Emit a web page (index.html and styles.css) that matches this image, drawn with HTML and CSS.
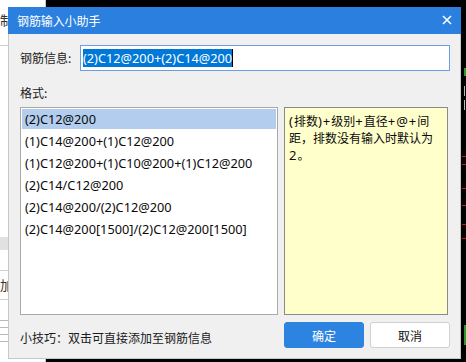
FILE: index.html
```html
<!DOCTYPE html>
<html lang="zh-CN">
<head>
<meta charset="utf-8">
<title>钢筋输入小助手</title>
<link rel="stylesheet" href="styles.css">
</head>
<body>
<div class="desktop">
  <div class="app-left">
    <div class="app-row app-row-top"><span class="app-char">制</span></div>
    <div class="app-band"></div>
    <div class="app-row app-row-mid"><span class="app-char">加</span></div>
    <div class="app-lines">
      <div class="app-line"></div>
      <div class="app-line"></div>
      <div class="app-line"></div>
      <div class="app-line"></div>
    </div>
  </div>
  <div class="cad">
    <div class="cad-mark cad-green c1"></div>
    <div class="cad-mark cad-white c2"></div>
    <div class="cad-mark cad-white c3"></div>
    <div class="cad-mark cad-red c4"></div>
    <div class="cad-mark cad-red c5"></div>
    <div class="cad-mark cad-red c6"></div>
    <div class="cad-mark cad-red c7"></div>
    <div class="cad-mark cad-red c8"></div>
    <div class="cad-mark cad-red c9"></div>
    <div class="cad-mark cad-green c10"></div>
  </div>

  <div class="dialog">
    <div class="titlebar">
      <span class="title">钢筋输入小助手</span>
      <svg class="close" width="10" height="10" viewBox="0 0 10 10"><path d="M1 1L9 9M9 1L1 9" stroke="#fff" stroke-width="1.6" fill="none"/></svg>
    </div>
    <div class="dialog-body">
      <div class="field-row">
        <span class="label">钢筋信息:</span>
        <div class="input"><span class="sel">(2)C12@200+(2)C14@200</span></div>
      </div>
      <div class="label format-label">格式:</div>
      <div class="panels">
        <div class="list">
          <div class="item selected">(2)C12@200</div>
          <div class="item">(1)C14@200+(1)C12@200</div>
          <div class="item">(1)C12@200+(1)C10@200+(1)C12@200</div>
          <div class="item">(2)C14/C12@200</div>
          <div class="item">(2)C14@200/(2)C12@200</div>
          <div class="item">(2)C14@200[1500]/(2)C12@200[1500]</div>
        </div>
        <div class="hint"><span class="lat">(</span>排数<span class="lat">)+</span>级别<span class="lat">+</span>直径<span class="lat">+@+</span>间<br>距，排数没有输入时默认为<br><span class="lat">2</span>。</div>
      </div>
      <div class="footer">
        <span class="tip">小技巧：双击可直接添加至钢筋信息</span>
        <div class="buttons">
          <button class="btn btn-primary">确定</button>
          <button class="btn">取消</button>
        </div>
      </div>
    </div>
  </div>
</div>
</body>
</html>
```

FILE: styles.css
```css
html, body {
  margin: 0;
  padding: 0;
}
body {
  width: 466px;
  height: 362px;
  overflow: hidden;
  background: #000;
  font-family: "Noto Sans", "Noto Sans CJK SC", sans-serif;
}
.desktop {
  position: relative;
  width: 466px;
  height: 362px;
  overflow: hidden;
  background: #000;
}

/* background application (left) */
.app-left {
  position: absolute;
  left: 0;
  top: 0;
  width: 45px;
  height: 362px;
  background: #fff;
  border-right: 1px solid #c8c8c8;
  display: flex;
  flex-direction: column;
}
.app-row {
  border-bottom: 1px solid #cfcfcf;
  font-size: 13px;
  color: #333;
  font-family: "Noto Sans CJK SC", sans-serif;
}
.app-row-top {
  height: 45px;
  line-height: 40px;
}
.app-char {
  display: inline-block;
  margin-left: 0;
}
.app-band {
  margin-top: 191px;
  height: 13px;
  background: #e1e1e1;
}
.app-row-mid {
  margin-top: 20px;
  height: 28px;
  line-height: 28px;
  border-top: 1px solid #cfcfcf;
}
.app-lines {
  margin-top: 20px;
  display: flex;
  flex-direction: column;
  gap: 6px;
}
.app-line {
  height: 1px;
  background: #b8b8b8;
}

/* CAD marks on the right */
.cad-mark {
  position: absolute;
  left: 462px;
  width: 4px;
  height: 1px;
}
.cad-red { background: #d01818; }
.cad-green { background: #2a9a2a; height: 8px; width: 2px; left: 464px; }
.cad-white { background: #bbb; height: 10px; width: 1px; left: 464px; }
.c1 { top: 68px; }
.c2 { top: 86px; }
.c3 { top: 100px; }
.c4 { top: 156px; }
.c5 { top: 164px; }
.c6 { top: 188px; }
.c7 { top: 205px; }
.c8 { top: 224px; }
.c9 { top: 238px; }
.c10 { top: 325px; height: 20px; }

/* dialog window */
.dialog {
  position: absolute;
  left: 8px;
  top: 7px;
  width: 453px;
  height: 352px;
  box-sizing: border-box;
  background: #f0f0f0;
  border: 1px solid #c9c9c9;
  border-top: 0;
  display: flex;
  flex-direction: column;
}
.titlebar {
  height: 27px;
  margin: 0 -1px;
  background: #2b7fde;
  display: flex;
  align-items: center;
  justify-content: space-between;
  padding: 0 9px 0 9px;
}
.title {
  color: #fff;
  font-size: 12px;
  font-family: "Noto Sans CJK SC", sans-serif;
  letter-spacing: -0.1px;
}
.close {
  display: block;
  margin-top: -1px;
}
.dialog-body {
  flex: 1;
  padding: 11px 10px 0 11px;
  display: flex;
  flex-direction: column;
}
.field-row {
  display: flex;
  align-items: center;
  height: 26px;
}
.label {
  font-size: 12px;
  color: #1a1a1a;
  font-family: "Noto Sans CJK SC", sans-serif;
  line-height: 16px;
}
.field-row .label {
  width: 60px;
  flex: none;
}
.input {
  flex: 1;
  height: 26px;
  box-sizing: border-box;
  border: 1px solid #6f9de3;
  background: #fff;
  padding: 3px 2px;
  display: flex;
  align-items: center;
}
.sel {
  background: #0078d7;
  color: #fff;
  font-size: 12.75px;
  line-height: 18px;
  height: 18px;
  border-right: 1px solid #000;
  white-space: nowrap;
}
.format-label {
  margin-top: 14px;
}
.panels {
  margin-top: 6px;
  display: flex;
  gap: 6px;
  height: 208px;
}
.list {
  width: 258px;
  box-sizing: border-box;
  border: 1px solid #a9a9a9;
  background: #fff;
  padding: 1px;
  display: flex;
  flex-direction: column;
  gap: 2px;
}
.item {
  height: 20px;
  line-height: 20px;
  padding-left: 3px;
  font-size: 12.75px;
  color: #0a0a0a;
  white-space: nowrap;
}
.item.selected {
  background: #b2cdee;
}
.hint {
  width: 164px;
  box-sizing: border-box;
  border: 1px solid #8a8a8a;
  background: #ffffcc;
  padding: 5px 4px;
  font-size: 12px;
  line-height: 16.7px;
  color: #0a0a0a;
  white-space: nowrap;
}
.lat {
  font-size: 13px;
  letter-spacing: 1px;
  line-height: 16px;
}
.footer {
  margin-top: 7px;
  height: 26px;
  display: flex;
  align-items: center;
  justify-content: space-between;
}
.tip {
  font-size: 12px;
  color: #1a1a1a;
  font-family: "Noto Sans CJK SC", sans-serif;
  margin-top: 4px;
}
.buttons {
  display: flex;
  gap: 6px;
}
.btn {
  width: 80px;
  height: 26px;
  box-sizing: border-box;
  border: 1px solid #d0d0d0;
  border-radius: 3px;
  background: #fff;
  color: #111;
  font-size: 12px;
  font-family: "Noto Sans CJK SC", sans-serif;
  padding: 0;
  margin: 0;
}
.btn-primary {
  background: #2d84e0;
  border-color: #2d84e0;
  color: #fff;
}
```
